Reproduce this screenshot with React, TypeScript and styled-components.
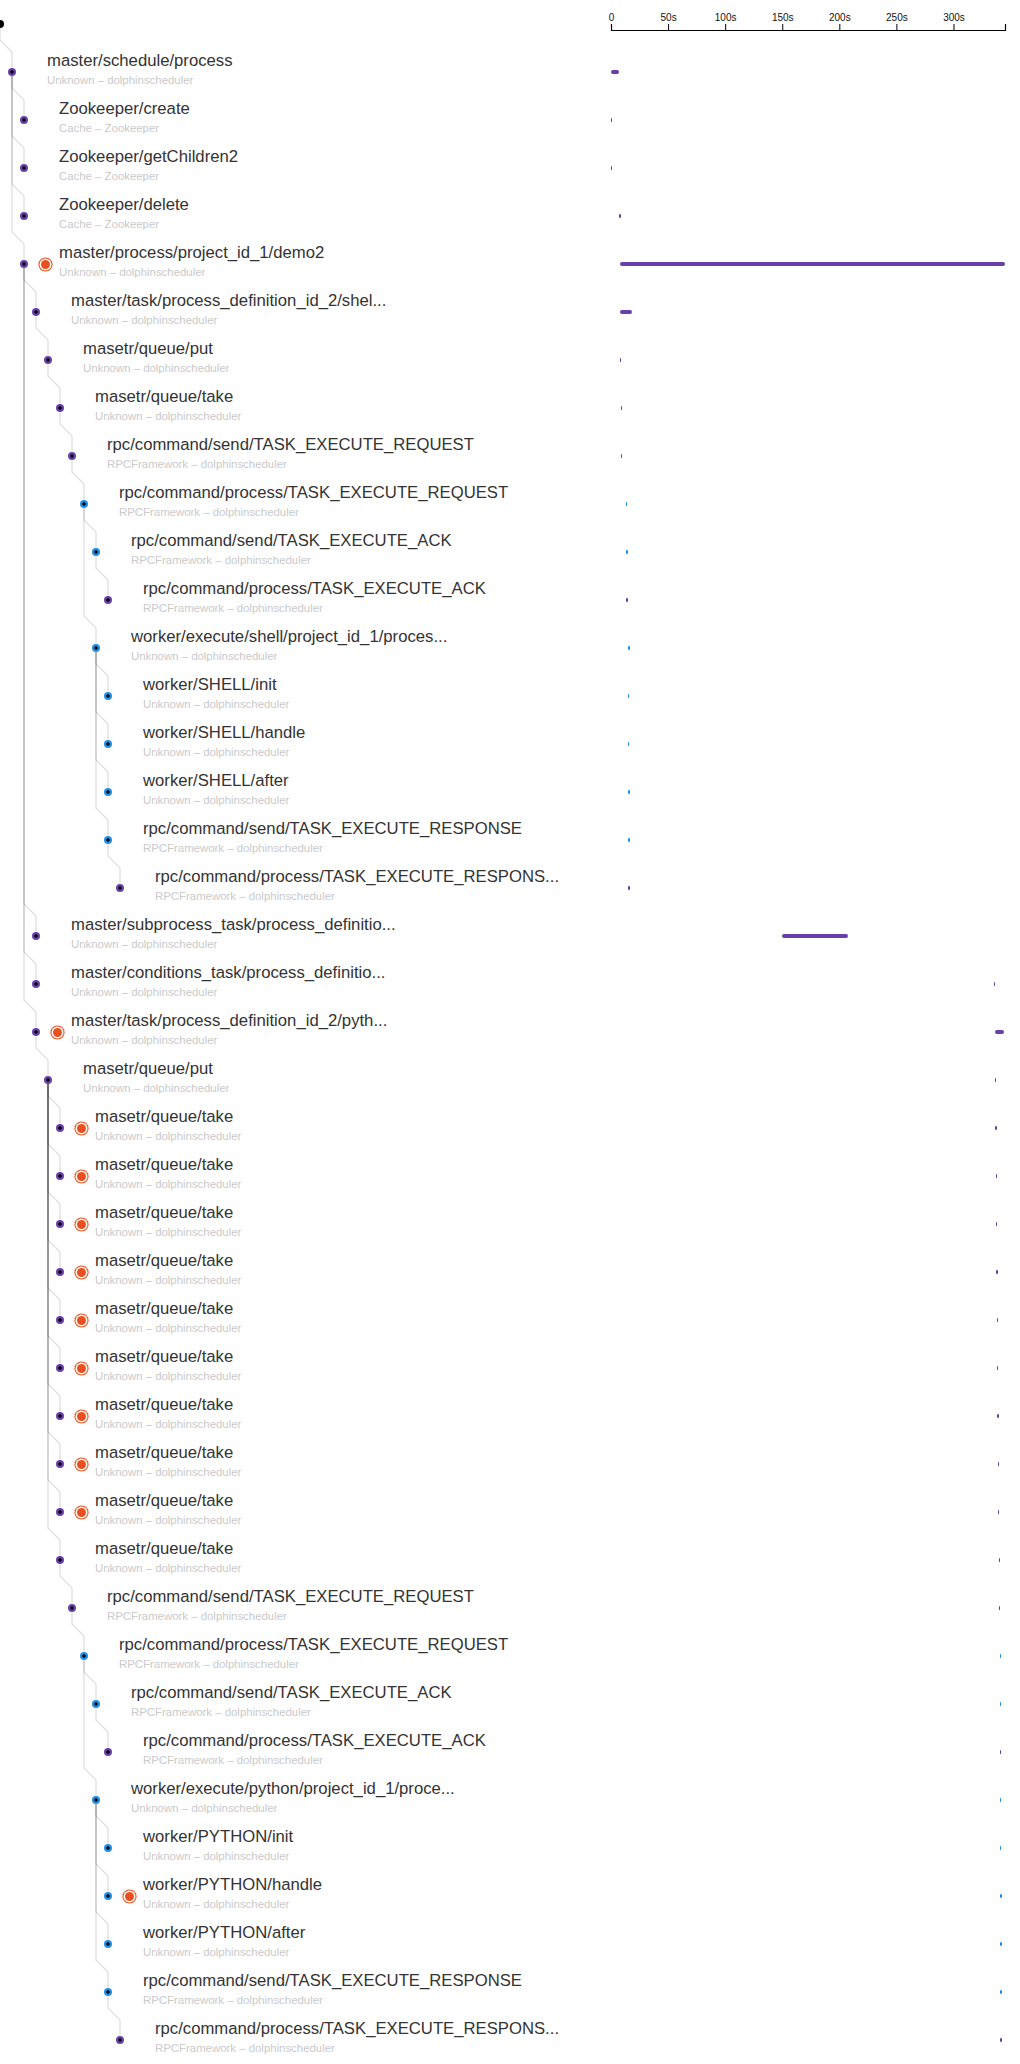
import React from "react";
import styled, { createGlobalStyle } from "styled-components";

const ROW_HEIGHT = 48;
const INDENT = 12;
const TREE_WIDTH = 610.5;
const TIMELINE_WIDTH = 395;
const TRACE_SECONDS = 346;
const PX_PER_SECOND = TIMELINE_WIDTH / TRACE_SECONDS;

const COLORS = {
  master: "#6a40a8",
  worker: "#1e90e6",
  error: "#e8501e",
  root: "#000",
};

type Service = "master" | "worker";

interface Span {
  depth: number;
  label: string;
  layer: string;
  component: string;
  service: Service;
  start: number;
  duration: number;
  error: boolean;
}

const DS = "dolphinscheduler";

function span(
  depth: number,
  label: string,
  layer: string,
  component: string,
  service: Service,
  start: number,
  duration: number,
  error = false
) : Span
{
  return { depth, label, layer, component, service, start, duration, error };
}

const queueTakes = Array.from({ length: 9 }, (_, i) =>
  span(5, "masetr/queue/take", "Unknown", DS, "master", 337 + i * 0.3, 0.6, true)
);

const spans : Span[] = [
  span(0, "", "", "", "master", 0, 0),
  span(1, "master/schedule/process", "Unknown", DS, "master", 0, 7.5),
  span(2, "Zookeeper/create", "Cache", "Zookeeper", "master", 0.2, 0.4),
  span(2, "Zookeeper/getChildren2", "Cache", "Zookeeper", "master", 0.2, 0.4),
  span(2, "Zookeeper/delete", "Cache", "Zookeeper", "master", 7.8, 0.5),
  span(2, "master/process/project_id_1/demo2", "Unknown", DS, "master", 8.1, 337.5, true),
  span(3, "master/task/process_definition_id_2/shel...", "Unknown", DS, "master", 8.2, 11),
  span(4, "masetr/queue/put", "Unknown", DS, "master", 8.1, 0.6),
  span(5, "masetr/queue/take", "Unknown", DS, "master", 8.9, 1.2),
  span(6, "rpc/command/send/TASK_EXECUTE_REQUEST", "RPCFramework", DS, "master", 9.2, 0.9),
  span(7, "rpc/command/process/TASK_EXECUTE_REQUEST", "RPCFramework", DS, "worker", 13.6, 1.3),
  span(8, "rpc/command/send/TASK_EXECUTE_ACK", "RPCFramework", DS, "worker", 14.0, 0.5),
  span(9, "rpc/command/process/TASK_EXECUTE_ACK", "RPCFramework", DS, "master", 14.0, 0.5),
  span(8, "worker/execute/shell/project_id_1/proces...", "Unknown", DS, "worker", 15.0, 1.8),
  span(9, "worker/SHELL/init", "Unknown", DS, "worker", 15.2, 0.4),
  span(9, "worker/SHELL/handle", "Unknown", DS, "worker", 15.3, 0.9),
  span(9, "worker/SHELL/after", "Unknown", DS, "worker", 15.7, 0.4),
  span(9, "rpc/command/send/TASK_EXECUTE_RESPONSE", "RPCFramework", DS, "worker", 15.7, 0.4),
  span(10, "rpc/command/process/TASK_EXECUTE_RESPONS...", "RPCFramework", DS, "master", 15.7, 0.5),
  span(3, "master/subprocess_task/process_definitio...", "Unknown", DS, "master", 150.2, 57.6),
  span(3, "master/conditions_task/process_definitio...", "Unknown", DS, "master", 335.8, 0.7),
  span(3, "master/task/process_definition_id_2/pyth...", "Unknown", DS, "master", 336.6, 8.2, true),
  span(4, "masetr/queue/put", "Unknown", DS, "master", 336.8, 0.6),
  ...queueTakes,
  span(5, "masetr/queue/take", "Unknown", DS, "master", 339.9, 0.6),
  span(6, "rpc/command/send/TASK_EXECUTE_REQUEST", "RPCFramework", DS, "master", 340.1, 0.5),
  span(7, "rpc/command/process/TASK_EXECUTE_REQUEST", "RPCFramework", DS, "worker", 340.9, 0.6),
  span(8, "rpc/command/send/TASK_EXECUTE_ACK", "RPCFramework", DS, "worker", 341.0, 0.4),
  span(9, "rpc/command/process/TASK_EXECUTE_ACK", "RPCFramework", DS, "master", 341.1, 0.4),
  span(8, "worker/execute/python/project_id_1/proce...", "Unknown", DS, "worker", 341.2, 0.6),
  span(9, "worker/PYTHON/init", "Unknown", DS, "worker", 341.0, 0.4),
  span(9, "worker/PYTHON/handle", "Unknown", DS, "worker", 341.3, 0.5, true),
  span(9, "worker/PYTHON/after", "Unknown", DS, "worker", 341.3, 0.4),
  span(9, "rpc/command/send/TASK_EXECUTE_RESPONSE", "RPCFramework", DS, "worker", 341.3, 0.4),
  span(10, "rpc/command/process/TASK_EXECUTE_RESPONS...", "RPCFramework", DS, "master", 341.4, 0.4),
];

// nearest earlier row one level up is the parent
const parentOf = spans.map((node, i) => {
  for (let j = i - 1; j >= 0; j--)
  {
    if (spans[j].depth === node.depth - 1) return j;
  }
  return -1;
});

function centerOf(index : number) : [number, number]
{
  return [spans[index].depth * INDENT, index * ROW_HEIGHT + ROW_HEIGHT / 2];
}

function linkPath(parent : number, child : number) : string
{
  const [px, py] = centerOf(parent);
  const [cx, cy] = centerOf(child);
  return `M${px} ${py} V${cy - 32} L${cx} ${cy - 20} V${cy}`;
}

const GlobalStyle = createGlobalStyle`
  html, body {
    margin: 0;
    padding: 0;
    background: #fff;
  }

  body {
    font-family: "Liberation Sans", Arial, sans-serif;
    -webkit-font-smoothing: antialiased;
  }
`;

const Trace = styled.div`
  position: relative;
  width: 1020px;
  height: ${spans.length * ROW_HEIGHT}px;
  overflow: hidden;
`;

const Links = styled.svg`
  position: absolute;
  top: 0;
  left: 0;
  overflow: visible;
  pointer-events: none;
`;

const Row = styled.div`
  position: relative;
  display: grid;
  grid-template-columns: ${TREE_WIDTH}px ${TIMELINE_WIDTH}px;
  height: ${ROW_HEIGHT}px;
`;

const TreeCell = styled.div`
  display: flex;
  align-items: center;
  min-width: 0;
`;

const Dot = styled.span<{ $depth : number; $color : string }>`
  flex: none;
  width: 8px;
  height: 8px;
  margin-left: ${p => p.$depth * INDENT - 4}px;
  border-radius: 50%;
  background: radial-gradient(circle, #000 0 1.4px, ${p => p.$color} 1.9px);
`;

const MarkerSlot = styled.span`
  flex: none;
  display: flex;
  align-items: center;
  width: 31px;
  padding-left: 12.5px;
  box-sizing: border-box;
`;

const ErrorMark = styled.span`
  width: 9px;
  height: 9px;
  border-radius: 50%;
  background: ${COLORS.error};
  box-shadow: 0 0 0 1.5px #fff, 0 0 0 2.6px ${COLORS.error};
`;

const Labels = styled.div`
  align-self: flex-start;
  display: flex;
  flex-direction: column;
  padding-top: 3px;
  white-space: nowrap;
`;

const Title = styled.span`
  font-size: 16.7px;
  line-height: 20px;
  color: #333;
`;

const Meta = styled.span`
  margin-top: 1.5px;
  font-size: 11.4px;
  line-height: 14px;
  color: #cacaca;
`;

const TimeCell = styled.div`
  display: flex;
  align-items: center;
`;

const Bar = styled.span<{ $color : string }>`
  flex: none;
  height: 4px;
  border-radius: 2px;
  background: ${p => p.$color};
`;

const AxisSvg = styled.svg`
  overflow: visible;
  font-family: "Liberation Sans", Arial, sans-serif;
  font-size: 10px;

  text {
    fill: #111;
  }
`;

function TimeAxis() : JSX.Element
{
  const ticks = [0, 50, 100, 150, 200, 250, 300];
  const end = TRACE_SECONDS * PX_PER_SECOND;

  return (
    <AxisSvg width={TIMELINE_WIDTH} height={ROW_HEIGHT}>
      <path d={`M0.5 24 V30.5 H${end - 0.5} V24`} fill="none" stroke="#000" strokeWidth={1.2}/>
      {ticks.map(t => {
        const x = t * PX_PER_SECOND + 0.5;
        return (
          <g key={t}>
            <line x1={x} x2={x} y1={24} y2={30} stroke="#000"/>
            <text x={x} y={21} textAnchor="middle">{t ? `${t}s` : "0"}</text>
          </g>
        );
      })}
    </AxisSvg>
  );
}

function SpanRow(props : { node : Span; index : number }) : JSX.Element
{
  const { node, index } = props;
  const color = index === 0 ? COLORS.root : COLORS[node.service];

  return (
    <Row>
      <TreeCell>
        <Dot $depth={node.depth} $color={color}/>
        {index > 0 && (
          <>
            <MarkerSlot>{node.error && <ErrorMark/>}</MarkerSlot>
            <Labels>
              <Title>{node.label}</Title>
              <Meta>{node.layer} – {node.component}</Meta>
            </Labels>
          </>
        )}
      </TreeCell>
      <TimeCell>
        {index === 0 ? <TimeAxis/> : (
          <Bar
            $color={color}
            style={{
              marginLeft: node.start * PX_PER_SECOND,
              width: Math.max(node.duration * PX_PER_SECOND, 1.4),
            }}
          />
        )}
      </TimeCell>
    </Row>
  );
}

export default function App() : JSX.Element
{
  return (
    <>
      <GlobalStyle/>
      <Trace>
        <Links width={TREE_WIDTH} height={spans.length * ROW_HEIGHT}>
          {spans.map((_, i) => parentOf[i] < 0 ? null : (
            <path
              key={i}
              d={linkPath(parentOf[i], i)}
              fill="none"
              stroke="rgba(0, 0, 0, 0.12)"
              strokeWidth={1.4}
            />
          ))}
        </Links>
        {spans.map((node, i) => <SpanRow key={i} node={node} index={i}/>)}
      </Trace>
    </>
  );
}
